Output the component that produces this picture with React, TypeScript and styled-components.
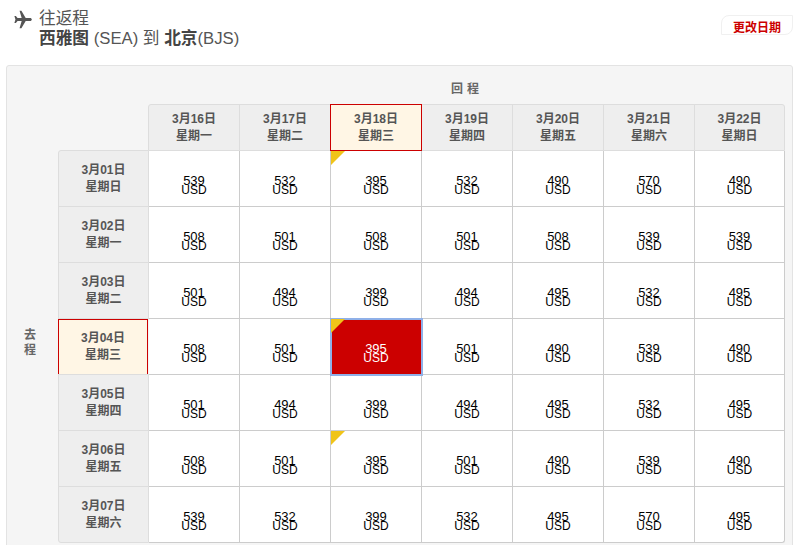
import { Fragment } from "react";
import styled, { createGlobalStyle } from "styled-components";

const GlobalStyle = createGlobalStyle`
	html, body {
		margin: 0;
		padding: 0;
		height: 545px;
		overflow: hidden;
		background: #fff;
		font-family: "Liberation Sans", "Noto Sans CJK SC", sans-serif;
	}
`;

const Page = styled.div`
	width: 797px;
	color: #444;
`;

const Header = styled.header`
	display: flex;
	height: 65px;
	padding: 9px 4px 0 14px;
	box-sizing: border-box;
`;

const PlaneIcon = styled.svg`
	width: 21px;
	height: 21px;
	margin: 0 0 0 -1px;
	fill: #555;
`;

const Route = styled.div`
	margin-left: 5px;
	flex: 1;
	font-size: 16.7px;
	line-height: 20px;
	color: #555;
`;

const TripType = styled.div``;

const Cities = styled.div`
	b {
		color: #444;
		font-weight: 700;
	}
`;

const ChangeDate = styled.button`
	align-self: flex-start;
	margin-top: 6px;
	width: 72px;
	height: 20px;
	padding: 2px 0 0;
	box-sizing: border-box;
	border: 1px solid #f0f0f0;
	border-radius: 8px 0 8px 0;
	background: #fff;
	color: #c00;
	font-family: inherit;
	font-size: 12px;
	font-weight: 700;
`;

const Panel = styled.section`
	margin-left: 6px;
	width: 787px;
	height: 500px;
	box-sizing: border-box;
	border: 1px solid #e3e3e3;
	border-radius: 3px;
	background: #f5f5f5;
	padding-left: 51px;
`;

const ReturnLabel = styled.div`
	height: 38px;
	padding: 15px 0 0 84px;
	box-sizing: border-box;
	text-align: center;
	font-size: 12px;
	line-height: 16px;
	font-weight: 700;
	color: #666;
	letter-spacing: 4px;
`;

const Matrix = styled.div`
	position: relative;
	display: grid;
	grid-template-columns: repeat(8, 91px);
	grid-template-rows: 47px repeat(7, 56px);
	width: 726px;
`;

const DepartLabel = styled.div`
	position: absolute;
	left: -52px;
	top: 47px;
	bottom: 9px;
	width: 48px;
	display: flex;
	align-items: center;
	justify-content: center;
	font-size: 12px;
	line-height: 15px;
	font-weight: 700;
	color: #666;
	text-align: center;
`;

const Corner = styled.div``;

const DateCell = styled.div<{ $active?: boolean }>`
	display: flex;
	flex-direction: column;
	align-items: center;
	justify-content: center;
	box-sizing: border-box;
	font-size: 12px;
	line-height: 17px;
	font-weight: 700;
	color: #555;
	background: ${(p) => (p.$active ? "#fff6e5" : "#eee")};
	border: 1px solid ${(p) => (p.$active ? "#c00" : "#ddd")};
`;

const ReturnDate = styled(DateCell)<{ $first?: boolean; $last?: boolean }>`
	margin-left: -1px;
	${(p) => p.$active && "position: relative; z-index: 1;"}
	${(p) => p.$first && "border-top-left-radius: 3px;"}
	${(p) => p.$last && "border-top-right-radius: 3px; margin-right: 1px;"}
`;

const DepartDate = styled(DateCell)<{ $first?: boolean; $last?: boolean }>`
	margin-top: ${(p) => (p.$active ? "0" : "-1px")};
	${(p) => p.$active && "margin-right: 1px;"}
	${(p) => p.$first && "border-top-left-radius: 3px;"}
	${(p) => p.$last && "border-bottom-left-radius: 3px;"}
`;

const Fare = styled.div<{ $selected?: boolean; $last?: boolean; $end?: boolean }>`
	position: relative;
	box-sizing: border-box;
	display: flex;
	flex-direction: column;
	align-items: center;
	padding-top: 25px;
	color: ${(p) => (p.$selected ? "#fff" : "#000")};
	background: ${(p) => (p.$selected ? "#c00" : "#fff")};
	border-right: 1px solid #ccc;
	border-bottom: 1px solid #ccc;
	${(p) => p.$last && "margin-right: 1px;"}
	${(p) => p.$end && "border-bottom-right-radius: 3px;"}
	${(p) => p.$selected && "outline: 2px solid #8fb0e8; outline-offset: -1px; z-index: 1;"}
`;

const Amount = styled.span`
	font-size: 13px;
	line-height: 10px;
`;

const Currency = styled.span`
	font-size: 12px;
	line-height: 9px;
`;

const Lowest = styled.span`
	position: absolute;
	left: 0;
	top: 0;
	width: 0;
	height: 0;
	border-top: 14px solid #f0c419;
	border-right: 14px solid transparent;
`;

const returnDates = [
	["3月16日", "星期一"],
	["3月17日", "星期二"],
	["3月18日", "星期三"],
	["3月19日", "星期四"],
	["3月20日", "星期五"],
	["3月21日", "星期六"],
	["3月22日", "星期日"],
];

const departRows = [
	{ date: "3月01日", day: "星期日", fares: [539, 532, 395, 532, 490, 570, 490], low: true },
	{ date: "3月02日", day: "星期一", fares: [508, 501, 508, 501, 508, 539, 539] },
	{ date: "3月03日", day: "星期二", fares: [501, 494, 399, 494, 495, 532, 495] },
	{ date: "3月04日", day: "星期三", fares: [508, 501, 395, 501, 490, 539, 490], low: true },
	{ date: "3月05日", day: "星期四", fares: [501, 494, 399, 494, 495, 532, 495] },
	{ date: "3月06日", day: "星期五", fares: [508, 501, 395, 501, 490, 539, 490], low: true },
	{ date: "3月07日", day: "星期六", fares: [539, 532, 399, 532, 495, 570, 495] },
];

const ACTIVE_COL = 2;
const ACTIVE_ROW = 3;

export default function App() {
	return (
		<Page>
			<GlobalStyle />
			<Header>
				<PlaneIcon viewBox="0 0 24 24">
					<path d="M21.5 12c0-1-.9-1.7-2-1.7h-5L9.6 2H7.5l2.4 8.3H5.2L3.3 8H1.6l1.2 4-1.2 4h1.7l1.9-2.3h4.7L7.5 22h2.1l4.9-8.3h5c1.1 0 2-.7 2-1.7z" />
				</PlaneIcon>
				<Route>
					<TripType>往返程</TripType>
					<Cities>
						<b>西雅图</b> (SEA) 到 <b>北京</b>(BJS)
					</Cities>
				</Route>
				<ChangeDate>更改日期</ChangeDate>
			</Header>
			<Panel>
				<ReturnLabel>回程</ReturnLabel>
				<Matrix>
					<DepartLabel>
						去
						<br />
						程
					</DepartLabel>
					<Corner />
					{returnDates.map(([date, day], i) => (
						<ReturnDate
							key={date}
							$active={i === ACTIVE_COL}
							$first={i === 0}
							$last={i === returnDates.length - 1}
						>
							<span>{date}</span>
							<span>{day}</span>
						</ReturnDate>
					))}
					{departRows.map((row, r) => (
						<Fragment key={row.date}>
							<DepartDate
								$active={r === ACTIVE_ROW}
								$first={r === 0}
								$last={r === departRows.length - 1}
							>
								<span>{row.date}</span>
								<span>{row.day}</span>
							</DepartDate>
							{row.fares.map((fare, c) => (
								<Fare
									key={c}
									$selected={r === ACTIVE_ROW && c === ACTIVE_COL}
									$last={c === row.fares.length - 1}
									$end={c === row.fares.length - 1 && r === departRows.length - 1}
								>
									{row.low && c === ACTIVE_COL && <Lowest />}
									<Amount>{fare}</Amount>
									<Currency>USD</Currency>
								</Fare>
							))}
						</Fragment>
					))}
				</Matrix>
			</Panel>
		</Page>
	);
}
